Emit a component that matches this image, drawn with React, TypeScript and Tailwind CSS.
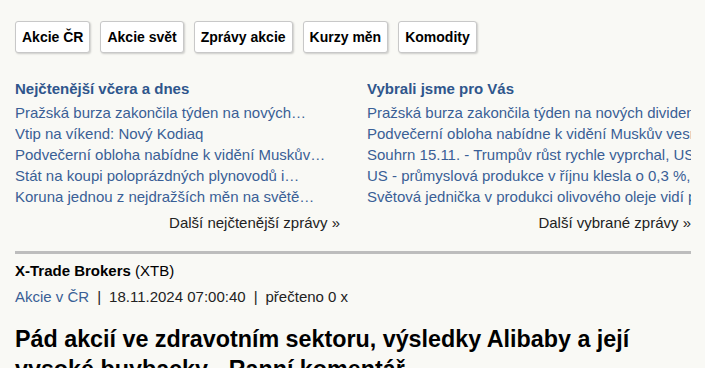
import React from 'react';

const tabs = ['Akcie ČR', 'Akcie svět', 'Zprávy akcie', 'Kurzy měn', 'Komodity'];

const mostRead = [
  'Pražská burza zakončila týden na nových…',
  'Vtip na víkend: Nový Kodiaq',
  'Podvečerní obloha nabídne k vidění Muskův…',
  'Stát na koupi poloprázdných plynovodů i…',
  'Koruna jednou z nejdražších měn na světě…',
];

const picked = [
  'Pražská burza zakončila týden na nových dividendových maximech',
  'Podvečerní obloha nabídne k vidění Muskův vesmírný vláček',
  'Souhrn 15.11. - Trumpův růst rychle vyprchal, USA',
  'US - průmyslová produkce v říjnu klesla o 0,3 %, oč',
  'Světová jednička v produkci olivového oleje vidí pokles',
];

interface NewsBoxProps {
  title: string;
  items: string[];
  more: string;
}

const NewsBox: React.FC<NewsBoxProps> = ({ title, items, more }) => (
  <div className="overflow-hidden">
    <h3 className="text-[15px] leading-[21px] font-bold text-[#2f568c] mb-[3px]">{title}</h3>
    <ul>
      {items.map((t) => (
        <li key={t} className="text-[15px] leading-[21px] text-[#3a5f96] whitespace-nowrap">
          {t}
        </li>
      ))}
    </ul>
    <div className="mt-[5px] text-[15px] leading-[21px] text-[#222] text-right">{more}</div>
  </div>
);

export default function App() {
  return (
    <div
      className="min-h-screen w-[705px] h-[368px] overflow-hidden bg-[#f9f9f5] text-black"
      style={{ fontFamily: '"Liberation Sans", Arial, sans-serif' }}
    >
      <div className="w-[676px] ml-[15px] pt-[21px]">
        <div className="flex gap-[10px]">
          {tabs.map((t) => (
            <div
              key={t}
              className="h-[32px] px-[6px] flex items-center bg-white border border-[#c8c8c8] rounded-[3px] shadow-[1px_1px_2px_rgba(0,0,0,0.18)] text-[14px] font-bold whitespace-nowrap"
            >
              {t}
            </div>
          ))}
        </div>

        <div className="mt-[25px] grid grid-cols-[325px_324px] gap-x-[27px]">
          <NewsBox title="Nejčtenější včera a dnes" items={mostRead} more="Další nejčtenější zprávy »" />
          <NewsBox title="Vybrali jsme pro Vás" items={picked} more="Další vybrané zprávy »" />
        </div>

        <div className="mt-[18px] h-[3px] bg-[#bdbdbd]" />

        <div className="mt-[6px] text-[15px] leading-[21px]">
          <span className="font-bold">X-Trade Brokers</span> (XTB)
        </div>
        <div className="mt-[5px] text-[15px] leading-[21px] text-[#222]">
          <span className="text-[#3a5f96]">Akcie v ČR</span>
          <span className="mx-[8px]">|</span>
          18.11.2024 07:00:40
          <span className="mx-[8px]">|</span>
          přečteno 0 x
        </div>

        <h1 className="mt-[17px] text-[23.3px] leading-[30px] font-bold text-black w-[640px]">
          Pád akcií ve zdravotním sektoru, výsledky Alibaby a její vysoké buybacky - Ranní komentář
        </h1>
      </div>
    </div>
  );
}
